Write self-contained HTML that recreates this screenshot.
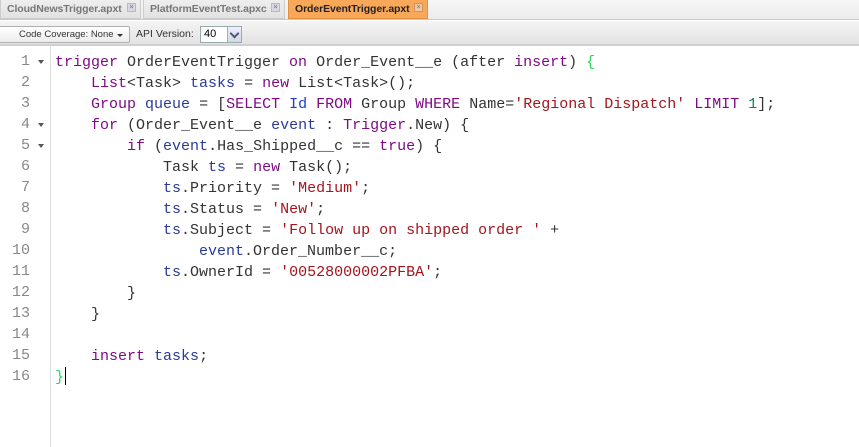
<!DOCTYPE html>
<html><head><style>
*{margin:0;padding:0;box-sizing:border-box}
body{width:859px;height:447px;overflow:hidden;background:#fff;font-family:"Liberation Sans",sans-serif;position:relative}
.tabs{position:absolute;left:0;top:0;width:859px;height:20px;background:linear-gradient(#f6f6f6,#ececec);border-bottom:1px solid #c8c8c8}
.tab{position:absolute;top:0;height:19px;background:linear-gradient(#eee,#e2e2e2);border:1px solid #ccc;border-top:none;font-weight:bold;font-size:10.5px;letter-spacing:-0.1px;color:#777;padding:3px 0 0 6px;white-space:nowrap;overflow:hidden}
.tab .x{position:absolute;right:4px;top:3px;width:9px;height:9px;background:#d8d8e4;border:1px solid #b8b8c8;font-size:7px;line-height:7px;text-align:center;color:#889;letter-spacing:0}
.tab.act{background:#f9a85a;color:#222;border-color:#e09040}
.tab.act .x{background:#f0c89a;border-color:#d09060}
.tb{position:absolute;left:0;top:20px;width:859px;height:26px;background:linear-gradient(#f4f4f4,#e3e3e3);border-top:1px solid #fff;border-bottom:2px solid #d0d0d0}
.btn{position:absolute;left:-2px;top:5px;width:132px;height:17px;border:1px solid #b0b0b0;border-radius:2px;background:linear-gradient(#fff,#ececec);font-size:9.5px;color:#333;padding:2px 0 0 20px;white-space:nowrap}
.btn:after{content:"";position:absolute;right:6px;top:7px;border:3px solid transparent;border-top:3px solid #333}
.lbl{position:absolute;left:136px;top:7px;font-size:10.5px;color:#333}
.sel{position:absolute;left:200px;top:5px;width:42px;height:17px;border:1px solid #9aa;background:#fff;font-size:11px;padding:1px 0 0 3px;color:#000}
.sel span{position:absolute;right:0;top:0;width:14px;height:15px;background:linear-gradient(#eef,#d4d8e0);border-left:1px solid #aab}
.sel span:after{content:"";position:absolute;left:3px;top:3px;width:5px;height:5px;border-right:2px solid #4a5a80;border-bottom:2px solid #4a5a80;transform:rotate(45deg)}
.gut{position:absolute;left:0;top:46px;width:51px;height:401px;border-right:1px solid #ddd;background:#fff}
.ln{position:absolute;left:0;width:30px;text-align:right;font-family:"Liberation Mono",monospace;font-size:15px;color:#888}
.fd{position:absolute;left:38px;width:0;height:0;border:3px solid transparent;border-top:4px solid #555}
pre{position:absolute;left:55px;top:52px;font-family:"Liberation Mono",monospace;font-size:15px;line-height:21px;color:#333}
.k{color:#7d0b86}.v{color:#2a3a9a}.s{color:#a3151d}.n{color:#098658}.g{color:#2bd45a}.b{color:#1a40c8}
.cur{display:inline-block;width:1px;height:18px;background:#000;vertical-align:-4px;margin-left:1px}
</style></head><body>
<div class="tabs">
<div class="tab" style="left:0;width:141px">CloudNewsTrigger.apxt<span class="x">×</span></div>
<div class="tab" style="left:143px;width:142px">PlatformEventTest.apxc<span class="x">×</span></div>
<div class="tab act" style="left:288px;width:140px">OrderEventTrigger.apxt<span class="x">×</span></div>
</div>
<div class="tb">
<div class="btn">Code Coverage: None</div>
<div class="lbl">API Version:</div>
<div class="sel">40<span></span></div>
</div>
<div class="gut">
<div class="ln" style="top:7px">1</div><div class="fd" style="top:14px"></div>
<div class="ln" style="top:28px">2</div>
<div class="ln" style="top:49px">3</div>
<div class="ln" style="top:70px">4</div><div class="fd" style="top:77px"></div>
<div class="ln" style="top:91px">5</div><div class="fd" style="top:98px"></div>
<div class="ln" style="top:112px">6</div>
<div class="ln" style="top:133px">7</div>
<div class="ln" style="top:154px">8</div>
<div class="ln" style="top:175px">9</div>
<div class="ln" style="top:196px">10</div>
<div class="ln" style="top:217px">11</div>
<div class="ln" style="top:238px">12</div>
<div class="ln" style="top:259px">13</div>
<div class="ln" style="top:280px">14</div>
<div class="ln" style="top:301px">15</div>
<div class="ln" style="top:322px">16</div>
</div>
<pre><span class="k">trigger</span> OrderEventTrigger <span class="k">on</span> Order_Event__e (after <span class="k">insert</span>) <span class="g">{</span>
    <span class="k">List</span>&lt;Task&gt; <span class="v">tasks</span> = <span class="k">new</span> List&lt;Task&gt;();
    <span class="k">Group</span> <span class="v">queue</span> = [<span class="k">SELECT</span> <span class="b">Id</span> <span class="k">FROM</span> Group <span class="k">WHERE</span> Name=<span class="s">'Regional Dispatch'</span> <span class="k">LIMIT</span> <span class="n">1</span>];
    <span class="k">for</span> (Order_Event__e <span class="v">event</span> : <span class="k">Trigger</span>.New) {
        <span class="k">if</span> (<span class="v">event</span>.Has_Shipped__c == <span class="k">true</span>) {
            Task <span class="v">ts</span> = <span class="k">new</span> Task();
            <span class="v">ts</span>.Priority = <span class="s">'Medium'</span>;
            <span class="v">ts</span>.Status = <span class="s">'New'</span>;
            <span class="v">ts</span>.Subject = <span class="s">'Follow up on shipped order '</span> +
                <span class="v">event</span>.Order_Number__c;
            <span class="v">ts</span>.OwnerId = <span class="s">'00528000002PFBA'</span>;
        }
    }

    <span class="k">insert</span> <span class="v">tasks</span>;
<span class="g">}</span><span class="cur"></span></pre>
</body></html>
